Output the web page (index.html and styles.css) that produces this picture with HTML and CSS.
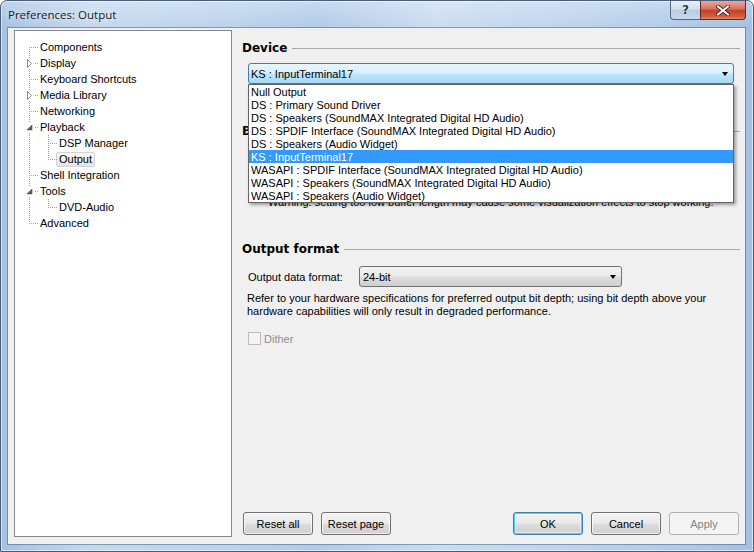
FILE: index.html
```html
<!DOCTYPE html>
<html>
<head>
<meta charset="utf-8">
<title>Preferences: Output</title>
<link rel="stylesheet" href="styles.css">
</head>
<body>
<div class="window">
  <div class="titlebar">
    <span class="title">Preferences: Output</span>
    <div class="caption-btns">
      <div class="cb help">?</div>
      <div class="cb close">
        <svg width="14" height="11" viewBox="0 0 14 11"><path d="M2 1.5 L12 9.5 M12 1.5 L2 9.5" stroke="#3a1a14" stroke-width="3.6" stroke-linecap="square"/><path d="M2 1.5 L12 9.5 M12 1.5 L2 9.5" stroke="#ffffff" stroke-width="2" stroke-linecap="square"/></svg>
      </div>
    </div>
  </div>
  <div class="client">
    <div class="tree">
      <div class="row"><span class="g first h"></span><span class="lbl">Components</span></div>
      <div class="row"><span class="g mid h"><svg class="exp" width="9" height="9" viewBox="0 0 9 9"><path d="M2.5 0.5 L6.5 4.5 L2.5 8.5 Z" fill="#fff" stroke="#8a8a8a"/></svg></span><span class="lbl">Display</span></div>
      <div class="row"><span class="g mid h"></span><span class="lbl">Keyboard Shortcuts</span></div>
      <div class="row"><span class="g mid h"><svg class="exp" width="9" height="9" viewBox="0 0 9 9"><path d="M2.5 0.5 L6.5 4.5 L2.5 8.5 Z" fill="#fff" stroke="#8a8a8a"/></svg></span><span class="lbl">Media Library</span></div>
      <div class="row"><span class="g mid h"></span><span class="lbl">Networking</span></div>
      <div class="row"><span class="g mid h"><svg class="exp" width="9" height="9" viewBox="0 0 9 9"><path d="M7 2 L7 7 L2 7 Z" fill="#595959" stroke="#595959" stroke-width="0.6"/></svg></span><span class="lbl">Playback</span></div>
      <div class="row"><span class="g mid"></span><span class="g mid h"></span><span class="lbl">DSP Manager</span></div>
      <div class="row"><span class="g mid"></span><span class="g last h"></span><span class="lbl sel">Output</span></div>
      <div class="row"><span class="g mid h"></span><span class="lbl">Shell Integration</span></div>
      <div class="row"><span class="g mid h"><svg class="exp" width="9" height="9" viewBox="0 0 9 9"><path d="M7 2 L7 7 L2 7 Z" fill="#595959" stroke="#595959" stroke-width="0.6"/></svg></span><span class="lbl">Tools</span></div>
      <div class="row"><span class="g mid"></span><span class="g last h"></span><span class="lbl">DVD-Audio</span></div>
      <div class="row"><span class="g last h"></span><span class="lbl">Advanced</span></div>
    </div>
    <div class="panel">
      <div class="page">
        <div class="section-h sh-device"><span>Device</span></div>
        <div class="combo-wrap">
          <div class="combo focus"><span>KS : InputTerminal17</span><i class="arrow"></i></div>
          <ul class="popup">
            <li>Null Output</li>
            <li>DS : Primary Sound Driver</li>
            <li>DS : Speakers (SoundMAX Integrated Digital HD Audio)</li>
            <li>DS : SPDIF Interface (SoundMAX Integrated Digital HD Audio)</li>
            <li>DS : Speakers (Audio Widget)</li>
            <li class="hl">KS : InputTerminal17</li>
            <li>WASAPI : SPDIF Interface (SoundMAX Integrated Digital HD Audio)</li>
            <li>WASAPI : Speakers (SoundMAX Integrated Digital HD Audio)</li>
            <li>WASAPI : Speakers (Audio Widget)</li>
          </ul>
        </div>
        <div class="section-h sh-buffer"><span>Buffer length</span></div>
        <p class="warning">Warning: setting too low buffer length may cause some visualization effects to stop working.</p>
        <div class="section-h sh-format"><span>Output format</span></div>
        <div class="fmt-row">
          <span class="fmt-label">Output data format:</span>
          <div class="combo normal fmt-combo"><span>24-bit</span><i class="arrow"></i></div>
        </div>
        <p class="desc">Refer to your hardware specifications for preferred output bit depth; using bit depth above your<br>hardware capabilities will only result in degraded performance.</p>
        <div class="check"><span class="box"></span><span class="check-lbl">Dither</span></div>
      </div>
      <div class="buttons">
        <div class="btn">Reset all</div>
        <div class="btn">Reset page</div>
        <div class="btn default push">OK</div>
        <div class="btn">Cancel</div>
        <div class="btn disabled">Apply</div>
      </div>
    </div>
  </div>
</div>
</body>
</html>
```
FILE: styles.css
```css
* { box-sizing: border-box; }
html, body { margin: 0; padding: 0; }
body {
  width: 754px;
  height: 552px;
  overflow: hidden;
  font-family: "Liberation Sans", Arial, sans-serif;
  font-size: 11px;
  color: #000;
  background: #fff;
}
.window {
  width: 754px;
  height: 552px;
  border: 1px solid #4b5d76;
  border-radius: 7px 7px 0 0;
  display: flex;
  flex-direction: column;
  background:
    linear-gradient(180deg, rgba(255,255,255,0.28) 0px, rgba(255,255,255,0) 26px),
    linear-gradient(90deg, #a6c2e2 0%, #c4d9ef 12%, #bcd3ec 30%, #b2cbe8 42%, #cadcf1 58%, #c1d6ee 72%, #b3cce9 88%, #a3c0e1 100%);
  box-shadow: inset 0 0 0 1px rgba(255,255,255,0.55);
}
.titlebar {
  height: 27px;
  display: flex;
  align-items: center;
  flex: none;
}
.title {
  padding-left: 7px;
  font-family: "Open Sans", "Noto Sans", sans-serif;
  font-size: 11.5px;
  color: #1a1a1a;
  text-shadow: 0 0 6px rgba(255,255,255,0.9);
}
.caption-btns {
  margin-left: auto;
  margin-right: 7px;
  align-self: flex-start;
  display: flex;
}
.cb {
  height: 19px;
  display: flex;
  align-items: center;
  justify-content: center;
  border: 1px solid #56687f;
  border-top: none;
}
.help {
  width: 30px;
  border-radius: 0 0 0 4px;
  border-right: none;
  background: linear-gradient(180deg, #e6eef8 0%, #d3e0ef 45%, #b9cbe0 50%, #c9d9ec 100%);
  font-family: "DejaVu Sans", sans-serif;
  font-weight: bold;
  font-size: 12px;
  color: #2b3a4e;
  text-shadow: 0 0 2px #fff;
}
.close {
  width: 46px;
  border-radius: 0 0 4px 0;
  background: linear-gradient(180deg, #e9a99b 0%, #d7705c 45%, #c2412b 52%, #d25a40 85%, #e48a63 100%);
  border-color: #5b2a22;
}
.client {
  flex: 1;
  margin: 0 8px 7px 7px;
  background: #f0f0f0;
  box-shadow: 0 0 0 1px rgba(70,100,140,0.55);
  display: flex;
  padding: 2px 5px 7px 6px;
}
/* tree */
.tree {
  width: 218px;
  flex: none;
  background: #fff;
  border: 1px solid #828790;
  padding-top: 8px;
}
.row {
  height: 16px;
  display: flex;
  align-items: center;
  padding-left: 5px;
}
.g {
  width: 19px;
  height: 16px;
  flex: none;
  position: relative;
}
.g::before, .g.h::after {
  content: "";
  position: absolute;
}
.g.mid::before, .g.first::before, .g.last::before {
  left: 9px;
  width: 1px;
  background: repeating-linear-gradient(180deg, #a0a0a0 0 1px, transparent 1px 2px);
}
.g.mid::before { top: 0; height: 16px; }
.g.first::before { top: 8px; height: 8px; }
.g.last::before { top: 0; height: 9px; }
.g.h::after {
  left: 10px;
  top: 8px;
  width: 8px;
  height: 1px;
  background: repeating-linear-gradient(90deg, transparent 0 1px, #a0a0a0 1px 2px);
}
.exp {
  position: absolute;
  left: 5px;
  top: 4px;
  background: #fff;
  z-index: 1;
}
.lbl {
  margin-left: -2px;
  padding: 0 2px;
  border: 1px solid transparent;
  line-height: 13px;
  white-space: nowrap;
}
.lbl.sel {
  background: linear-gradient(180deg, #fafafa, #e6e6e6);
  border-color: #d4d4d4;
  border-radius: 2px;
}
/* panel */
.panel {
  flex: 1;
  margin-left: 10px;
  display: flex;
  flex-direction: column;
}
.section-h {
  display: flex;
  align-items: center;
  gap: 5px;
  height: 14px;
}
.section-h span {
  font-family: "DejaVu Sans", sans-serif;
  font-weight: bold;
  font-size: 12px;
  line-height: 14px;
}
.section-h::after {
  content: "";
  flex: 1;
  border-top: 1px solid #a9a9a9;
  margin-top: 1px;
}
.sh-device { margin-top: 11px; }
.sh-buffer { margin-top: 40px; }
.sh-format { margin-top: 33px; }
.combo-wrap {
  position: relative;
  margin: 8px 0 0 6px;
  width: 486px;
}
.combo {
  height: 21px;
  border: 1px solid #707070;
  border-radius: 3px;
  padding-left: 2px;
  display: flex;
  align-items: center;
  white-space: nowrap;
}
.combo.focus {
  border-color: #3c7fb1;
  background: linear-gradient(180deg, #eaf6fd 0%, #d9f0fc 48%, #bee6fd 52%, #a7d9f5 100%);
}
.combo.normal {
  background: linear-gradient(180deg, #f2f2f2 0%, #ebebeb 48%, #dddddd 52%, #cfcfcf 100%);
}
.arrow {
  margin-left: auto;
  margin-right: 5px;
  width: 0;
  height: 0;
  border-left: 3.5px solid transparent;
  border-right: 3.5px solid transparent;
  border-top: 4px solid #000;
}
.popup {
  position: absolute;
  left: 0;
  top: 21px;
  width: 486px;
  margin: 0;
  padding: 0;
  list-style: none;
  background: #fff;
  border: 1px solid #646464;
  box-shadow: 2px 2px 3px rgba(0,0,0,0.35);
  z-index: 5;
}
.popup li {
  height: 13px;
  line-height: 15px;
  padding-left: 2px;
  white-space: nowrap;
}
.popup li.hl {
  background: #3399ff;
  color: #fff;
}
.warning {
  margin: 58px 0 0 0;
  padding-left: 26px;
  line-height: 13px;
  white-space: nowrap;
}
.fmt-row {
  margin-top: 10px;
  padding-left: 6px;
  display: flex;
  align-items: center;
}
.fmt-label { width: 111px; }
.fmt-combo { width: 263px; padding-left: 3px; }
.desc {
  margin: 5px 0 0 0;
  padding-left: 5px;
  line-height: 13px;
  white-space: nowrap;
}
.check {
  margin-top: 14px;
  padding-left: 6px;
  display: flex;
  align-items: center;
  height: 13px;
}
.box {
  width: 13px;
  height: 13px;
  border: 1px solid #bcbcbc;
  background: #f4f4f4;
}
.check-lbl {
  margin-left: 3px;
  color: #8d8d8d;
}
.buttons {
  margin-top: auto;
  margin-bottom: 2px;
  display: flex;
  gap: 8px;
  padding-left: 1px;
  padding-right: 1px;
}
.btn {
  width: 70px;
  height: 23px;
  border: 1px solid #707070;
  border-radius: 3px;
  background: linear-gradient(180deg, #f2f2f2 0%, #ebebeb 48%, #dddddd 52%, #cfcfcf 100%);
  box-shadow: inset 0 0 0 1px rgba(255,255,255,0.7);
  display: flex;
  align-items: center;
  justify-content: center;
}
.btn.push { margin-left: auto; }
.btn.default {
  border-color: #3c7fb1;
  box-shadow: inset 0 0 0 1px #48d0f8, inset 0 0 0 2px rgba(255,255,255,0.5);
}
.btn.disabled {
  border-color: #adb2b5;
  background: #f4f4f4;
  box-shadow: none;
  color: #838383;
}
```
